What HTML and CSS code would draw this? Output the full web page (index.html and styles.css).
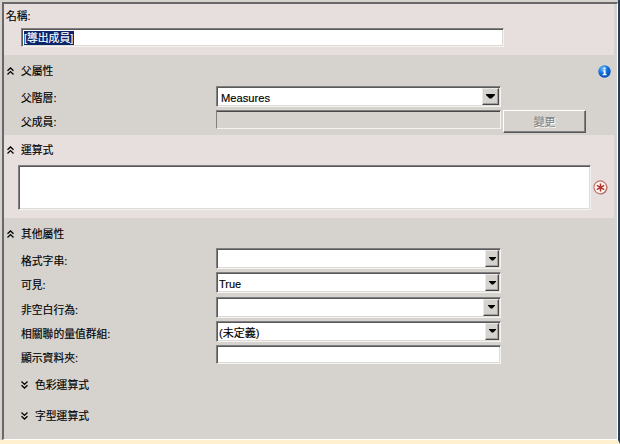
FILE: index.html
```
<!DOCTYPE html>
<html lang="zh-Hant">
<head>
<meta charset="utf-8">
<title>導出成員</title>
<link rel="stylesheet" href="styles.css">
</head>
<body>
<svg class="defs" width="0" height="0">
  <symbol id="up" viewBox="0 0 7 8"><path d="M.5 3.7 3.5 .9 6.5 3.7M.5 7.4 3.5 4.6 6.5 7.4"/></symbol>
  <symbol id="down" viewBox="0 0 7 8"><path d="M.5 .6 3.5 3.4 6.5 .6M.5 4.3 3.5 7.1 6.5 4.3"/></symbol>
  <symbol id="arrow" viewBox="0 0 9 5"><path d="M0 0H9V1L5.5 4.5H3.5L0 1Z"/></symbol>
</svg>
<main class="panel">
  <section class="band name">
    <label class="name-label">名稱:</label>
    <div class="field name-field"><span class="selected">[導出成員]</span></div>
  </section>

  <section class="parent">
    <header class="head">
      <svg class="chev"><use href="#up"/></svg><span class="title">父屬性</span>
      <svg class="info" viewBox="0 0 13 13">
        <defs><radialGradient id="blue" cx=".35" cy=".25" r=".8"><stop offset="0" stop-color="#63b5f5"/><stop offset=".5" stop-color="#1270dc"/><stop offset="1" stop-color="#0648ae"/></radialGradient></defs>
        <circle cx="6.5" cy="6.5" r="6.2" fill="url(#blue)"/>
        <path d="M5.5 2.6H7.6V4.4H5.5ZM4.7 5.2H7.6V9H8.6V10.2H4.6V9H5.7V6.3H4.7Z" fill="#fff"/>
      </svg>
    </header>
    <div class="row first"><label>父階層:</label><div class="field combo wide"><span class="value inset">Measures</span><i class="drop"><svg><use href="#arrow"/></svg></i></div></div>
    <div class="row"><label>父成員:</label><div class="field disabled"></div><button class="change" disabled>變更</button></div>
  </section>

  <section class="band expression">
    <header class="head"><svg class="chev"><use href="#up"/></svg><span class="title">運算式</span></header>
    <div class="editor">
      <div class="field area"></div>
      <svg class="required" viewBox="0 0 15 15">
        <circle cx="8" cy="8" r="6.5" fill="#9b8582"/>
        <circle cx="7.3" cy="7.3" r="6.4" fill="#fff6f3" stroke="#c0706b" stroke-width="1.1"/>
        <path d="M7.5 3.4V11.6M3.8 5.4 11.2 9.6M3.8 9.6 11.2 5.4" stroke="#b0352c" stroke-width="1.5"/>
      </svg>
    </div>
  </section>

  <section class="other">
    <header class="head"><svg class="chev"><use href="#up"/></svg><span class="title">其他屬性</span></header>
    <div class="row first"><label>格式字串:</label><div class="field combo"><span class="value"></span><i class="drop"><svg><use href="#arrow"/></svg></i></div></div>
    <div class="row"><label>可見:</label><div class="field combo"><span class="value">True</span><i class="drop"><svg><use href="#arrow"/></svg></i></div></div>
    <div class="row"><label>非空白行為:</label><div class="field combo mid"><span class="value"></span><i class="drop"><svg><use href="#arrow"/></svg></i></div></div>
    <div class="row"><label>相關聯的量值群組:</label><div class="field combo"><span class="value">(未定義)</span><i class="drop"><svg><use href="#arrow"/></svg></i></div></div>
    <div class="row"><label>顯示資料夾:</label><div class="field"></div></div>
    <header class="sub"><svg class="chev"><use href="#down"/></svg><span>色彩運算式</span></header>
    <header class="sub"><svg class="chev"><use href="#down"/></svg><span>字型運算式</span></header>
  </section>
</main>
</body>
</html>
```
FILE: styles.css
```
* { box-sizing: border-box; }

html { background: #d6d3ce; }

body {
  margin: 0;
  width: 620px;
  height: 444px;
  padding: 2px 0 0 2px;
  overflow: hidden;
  background: #d6d3ce;
  border-right: 2px solid #293b57;
  border-bottom: 4px solid #fff1cf;
  font: 10.8px/16px "Liberation Sans", "Noto Sans CJK TC", sans-serif;
  -webkit-text-stroke: 0.15px;
  color: #000;
}

.defs { position: absolute; }

.panel {
  height: 438px;
  border: 2px solid #68686a;
  border-right: 1px solid #fff;
  border-bottom: 1px solid #fff;
  padding-right: 3px;
}

section { overflow: hidden; }
.band { background: #e7dfde; }
.name { height: 51px; }
.name-label { display: block; margin: 4px 0 0 2px; }

.field {
  width: 285px;
  height: 19px;
  background: #fff;
  border: 1px solid;
  border-color: #808080 #f5f3f0 #f5f3f0 #808080;
  box-shadow: inset 1px 1px #585858, inset -1px -1px #dedbd7;
  white-space: nowrap;
}

.name-field { width: 483px; margin: 4px 0 0 17px; padding: 2px; }
.selected {
  display: block;
  width: 50px;
  height: 14px;
  line-height: 14px;
  background: #0a246a;
  color: #fff;
}

.parent { height: 80px; }
.head { display: flex; align-items: center; height: 16px; margin-top: 8px; padding-left: 3px; }
.chev { width: 7px; height: 8px; margin-top: -1px; fill: none; stroke: #000; stroke-width: 1.3; }
.title { margin-left: 7px; }
.info { width: 13px; height: 13px; margin: 0 3px 0 auto; }

.row { display: grid; grid-template-columns: 195px 285px auto; height: 24.3px; padding-left: 17px; }
.row label { padding-top: 4px; }
.first { margin-top: 7px; }

.combo { display: flex; height: 21px; padding: 1px; }
.value { flex: 1; padding: 2px 0 0 1px; font-size: 11px; }
.inset { padding-left: 3px; font-size: 11.2px; }
.drop {
  display: flex;
  align-items: center;
  justify-content: center;
  width: 14px;
  height: 17px;
  background: #d6d3ce;
  border: 1px solid;
  border-color: #eceae7 #484848 #484848 #eceae7;
  box-shadow: inset -1px -1px #a09e9b;
}
.drop svg { width: 7px; height: 4px; }
.mid .drop { width: 16px; }
.wide .drop { width: 17px; }
.wide .drop svg { width: 9px; height: 5px; }

.disabled { background: #d6d3ce; box-shadow: inset 0 1px #484848; }
.change {
  width: 83px;
  height: 23px;
  margin-left: 2px;
  padding: 0;
  border: 1px solid;
  border-color: #fff #5a5a5a #5a5a5a #fff;
  box-shadow: inset -1px -1px #808080;
  background: #d6d3ce;
  color: #858381;
  font: inherit;
  text-shadow: 1px 1px #fff;
}

.expression { height: 83px; }
.expression .head { margin-top: 7px; }
.editor { display: flex; align-items: center; gap: 2px; margin: 7px 0 0 14px; }
.area { width: 573px; height: 45px; }
.required { width: 15px; height: 15px; }

.other .first { margin-top: 6px; }
.other .row label { padding-top: 5px; }
.sub { display: flex; align-items: center; height: 16px; margin-top: 8px; padding-left: 17px; }
.sub span { margin-left: 7px; }
.sub + .sub { margin-top: 15px; }
```
